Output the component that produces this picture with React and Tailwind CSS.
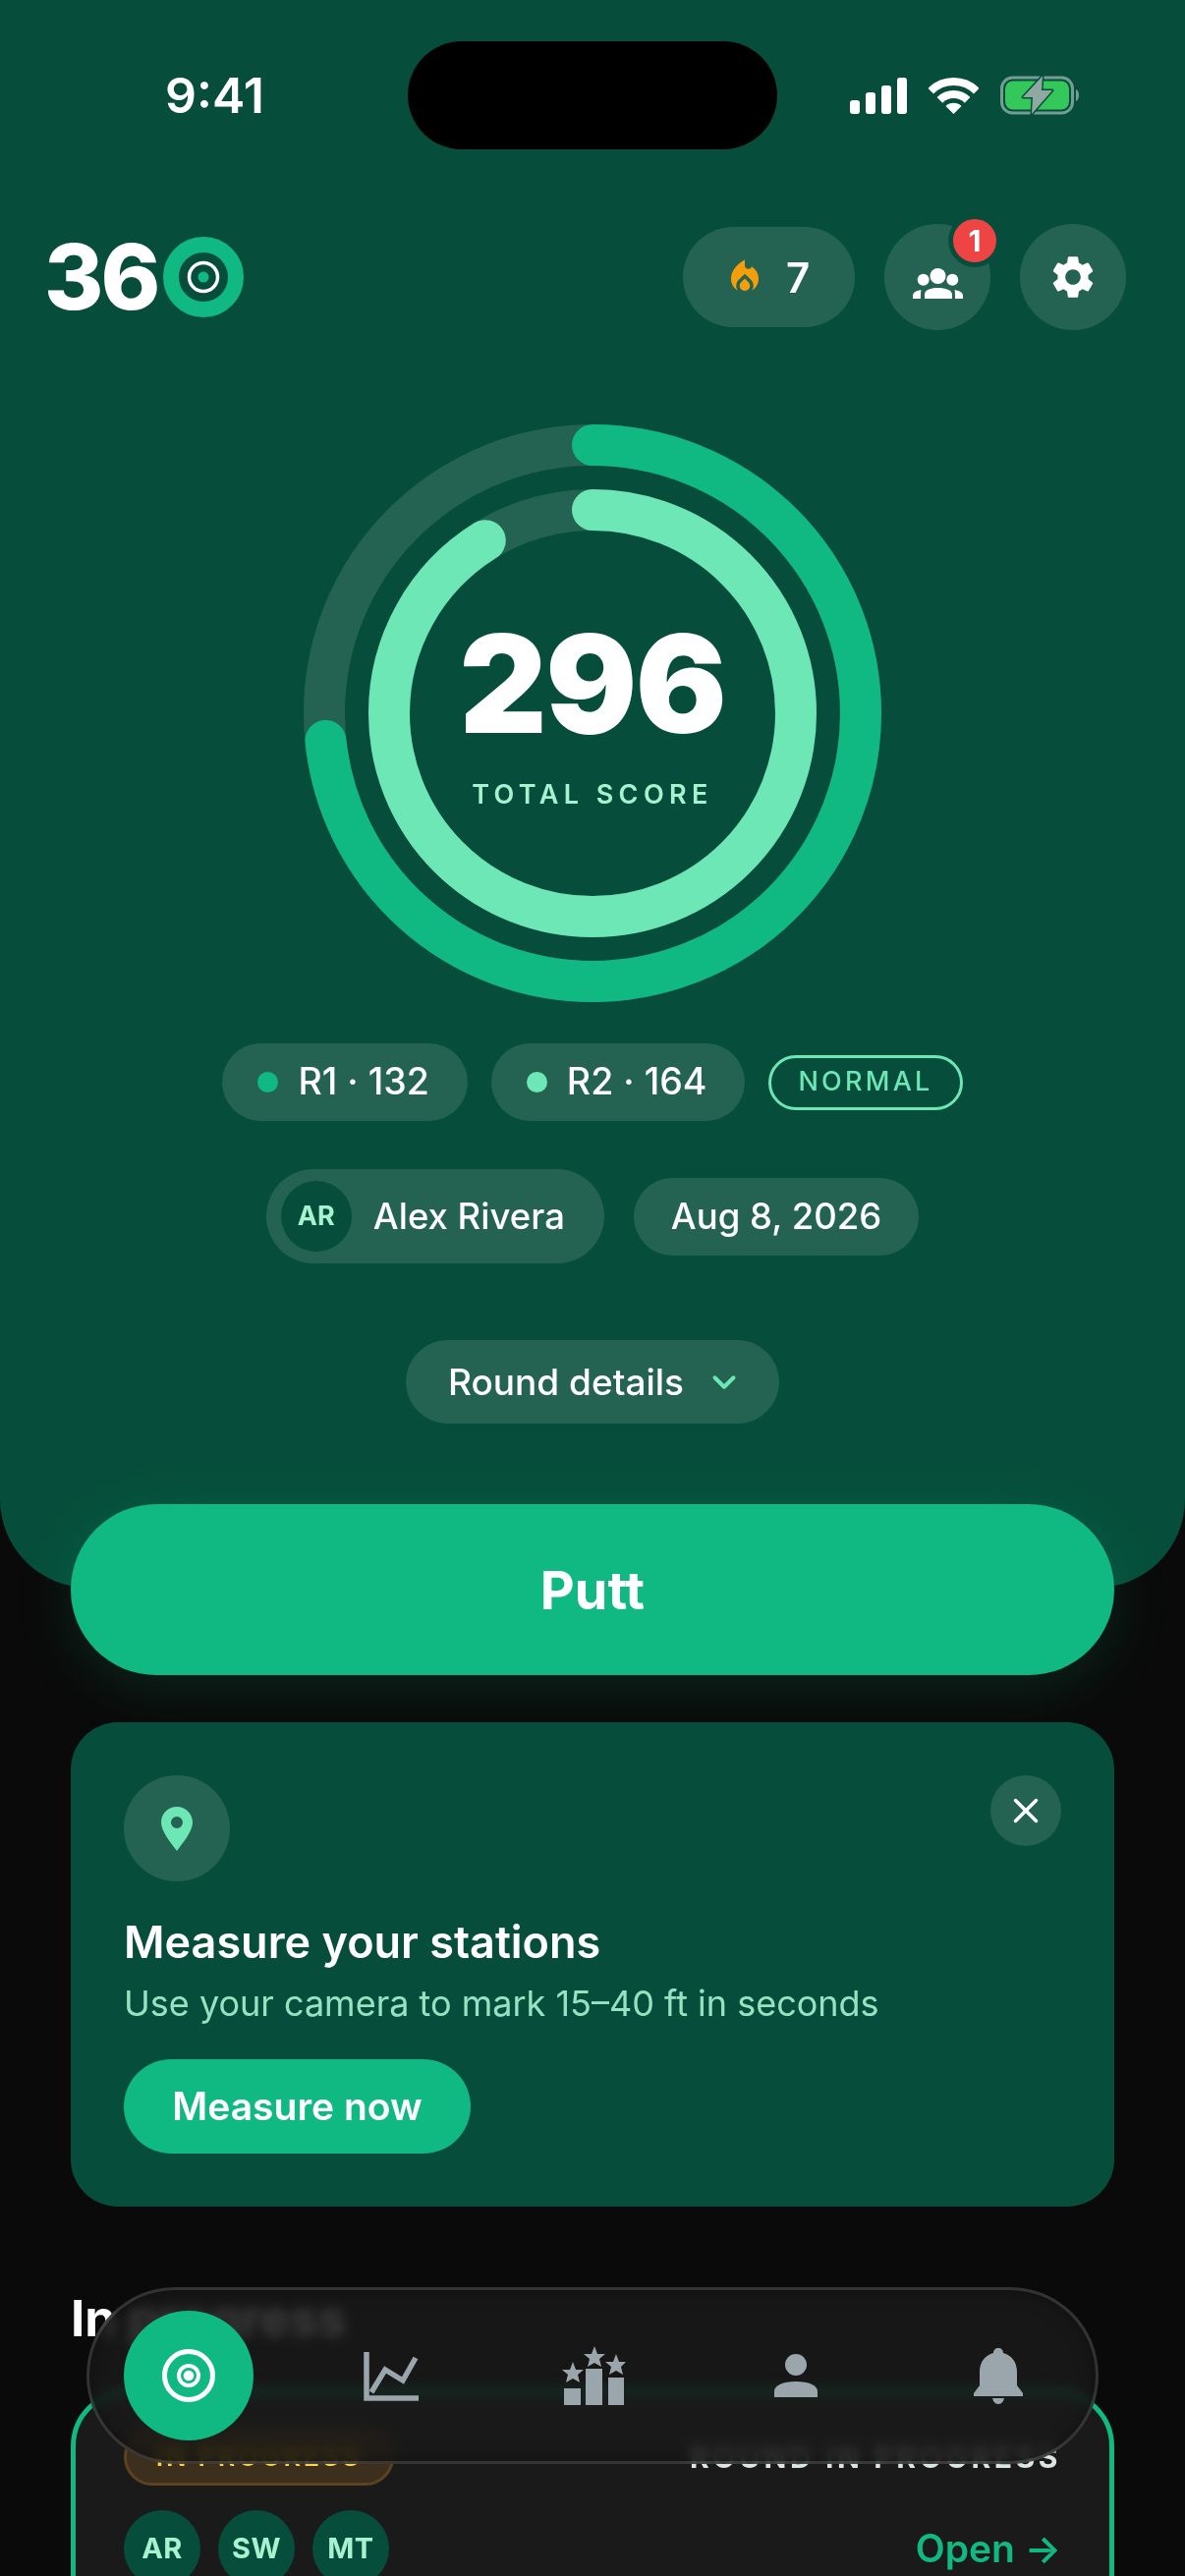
import { ChevronDown, X } from 'lucide-react';
import { MdLocalFireDepartment, MdSettings } from 'react-icons/md';

const OUTER_R = 273;
const INNER_R = 207;

const Ring = ({ radius, color, value }) => {
  const length = 2 * Math.PI * radius;
  return (
    <g fill="none" strokeWidth="42" transform="rotate(-90 294 294)">
      <circle cx="294" cy="294" r={radius} stroke="#ffffff" strokeOpacity="0.12" />
      <circle
        cx="294"
        cy="294"
        r={radius}
        stroke={color}
        strokeLinecap="round"
        strokeDasharray={`${(value / 180) * length} ${length}`}
      />
    </g>
  );
};

const StatusIcons = () => (
  <div className="flex items-center pl-[74px]">
    <svg width="58" height="37" viewBox="0 0 58 37" fill="#fff">
      <rect x="0" y="23" width="10" height="14" rx="3" />
      <rect x="16" y="15" width="10" height="22" rx="3" />
      <rect x="32" y="8" width="10" height="29" rx="3" />
      <rect x="48" y="0" width="10" height="37" rx="3" />
    </svg>
    <svg className="ml-[22px]" width="51" height="37" viewBox="0 0 51 37">
      <path d="M2.2 13.7A33 33 0 0 1 48.8 13.7M11.4 22.9A20 20 0 0 1 39.6 22.9" fill="none" stroke="#fff" strokeWidth="8" />
      <path d="M25.5 37L17.5 29A11.3 11.3 0 0 1 33.5 29Z" fill="#fff" />
    </svg>
    <svg className="ml-[22px]" width="84" height="42" viewBox="0 0 84 42">
      <rect x="1.5" y="3" width="72" height="36" rx="11" fill="none" stroke="#fff" strokeOpacity="0.45" strokeWidth="3" />
      <rect x="5" y="6.5" width="65" height="29" rx="8" fill="#34c759" />
      <path d="M77 15C81 16 81 26 77 27Z" fill="#fff" fillOpacity="0.45" />
      <path d="M43 1.3L23 23H33L32 40L53 16H42Z" fill="#8fa9a2" stroke="#064e3b" strokeWidth="3" strokeLinejoin="round" paintOrder="stroke" />
    </svg>
  </div>
);

const GroupIcon = () => (
  <svg width="51" height="31" viewBox="0 0 51 31" fill="#fff">
    <circle cx="25.5" cy="8" r="8" />
    <circle cx="10.7" cy="11.7" r="6" />
    <circle cx="40.3" cy="11.7" r="6" />
    <path d="M12 31V27C12 22 18 20 25.5 20S40 22 40 27V31Z" />
    <path d="M0 31V28C0 25 3 23 8.5 22C8 24 8 26 8 31Z" />
    <path d="M51 31V28C51 25 48 23 42.5 22C43 24 43 26 43 31Z" />
  </svg>
);

const ScoreChip = ({ dot, label }) => (
  <div className="flex h-[79px] items-center gap-[20px] rounded-full bg-white/12 pl-[36px] pr-[39px] text-[37.5px] font-medium text-white">
    <span className={`h-[21px] w-[21px] rounded-full ${dot}`} />
    {label}
  </div>
);

const NavChart = () => (
  <svg width="60" height="54" viewBox="0 0 60 54" fill="none" stroke="#9aa6ac" strokeWidth="5.5">
    <path d="M5 3V50H58" />
    <path d="M10 44L24 21L42 32L55 9" />
  </svg>
);

const NavPodium = () => (
  <svg width="66" height="60" viewBox="0 0 66 60" fill="#9aa6ac">
    <rect x="3" y="43" width="17" height="17" />
    <rect x="25" y="23" width="17" height="37" />
    <rect x="48" y="32" width="16" height="28" />
    <path d="M12 16L15 24L23 24L17 29L19 37L12 33L5 37L7 29L1 24L9 24Z" />
    <path d="M34 0L37 8L45 8L39 13L41 21L34 17L27 21L29 13L23 8L31 8Z" />
    <path d="M56 8L59 16L66 16L61 21L63 29L56 25L49 29L51 21L45 16L53 16Z" />
  </svg>
);

const NavPerson = () => (
  <svg width="44" height="44" viewBox="0 0 44 44" fill="#9aa6ac">
    <circle cx="22" cy="11" r="11" />
    <path d="M0 44V38C0 32 9 28 22 28S44 32 44 38V44Z" />
  </svg>
);

const NavBell = () => (
  <svg width="50" height="57" viewBox="0 0 50 57" fill="#9aa6ac">
    <path d="M25 0C28 0 30 2 30 5C38 7 44 14 44 24V38L50 46V49H0V46L6 38V24C6 14 12 7 20 5C20 2 22 0 25 0Z" />
    <path d="M19 51H31C30 55 28 57 25 57S20 55 19 51Z" />
  </svg>
);

const RoundAvatar = ({ initials }) => (
  <div className="flex h-[78px] w-[78px] items-center justify-center rounded-full bg-[#064e3b] text-[29px] font-bold tracking-[0.5px] text-[#a7f3d0]">
    {initials}
  </div>
);

const App = () => {
  return (
    <div className="relative h-[2622px] w-[1206px] overflow-hidden bg-[#0a0a0a] font-[Inter,sans-serif] text-white">
      <section className="h-[1616px] rounded-b-[90px] bg-[#064e3b] pt-[42px]">
        <div className="flex h-[110px] items-center">
          <div className="w-[415px] pl-[168px] text-[50px] font-semibold leading-none">9:41</div>
          <div className="h-[110px] w-[376px] rounded-full bg-black" />
          <StatusIcons />
        </div>

        <header className="mt-[76px] flex h-[108px] items-center justify-between pl-[45px] pr-[60px]">
          <div className="flex items-center gap-[6px]">
            <span className="text-[92px] font-extrabold leading-none tracking-[-3px]">36</span>
            <svg width="82" height="82" viewBox="0 0 82 82">
              <circle cx="41" cy="41" r="33" fill="none" stroke="#10b981" strokeWidth="16" />
              <circle cx="41" cy="41" r="14.5" fill="none" stroke="#fff" strokeWidth="3.5" />
              <circle cx="41" cy="41" r="5.5" fill="#10b981" />
            </svg>
          </div>
          <div className="flex items-center gap-[30px]">
            <div className="flex h-[102px] w-[175px] items-center gap-[21px] rounded-full bg-white/12 pl-[42px] text-[42px] font-semibold">
              <MdLocalFireDepartment size={42} color="#f59e0b" />
              7
            </div>
            <div className="relative flex h-[108px] w-[108px] items-center justify-center rounded-full bg-white/12">
              <span className="mt-[13px] block"><GroupIcon /></span>
              <span className="absolute right-[-11px] top-[-10px] flex h-[54px] w-[54px] items-center justify-center rounded-full border-[5px] border-[#064e3b] bg-[#ef4444] text-[30px] font-bold">
                1
              </span>
            </div>
            <div className="flex h-[108px] w-[108px] items-center justify-center rounded-full bg-white/12">
              <MdSettings size={52} />
            </div>
          </div>
        </header>

        <div className="mx-auto mt-[96px] grid h-[588px] w-[588px] place-items-center">
          <svg className="[grid-area:1/1]" width="588" height="588" viewBox="0 0 588 588">
            <Ring radius={OUTER_R} color="#10b981" value={132} />
            <Ring radius={INNER_R} color="#6ee7b7" value={164} />
          </svg>
          <div className="flex flex-col items-center [grid-area:1/1]">
            <span className="text-[138px] font-black leading-[138px] tracking-[-1.5px]">296</span>
            <span className="mt-[28px] text-[27px] font-semibold leading-[32px] tracking-[0.2em] text-[#a7f3d0]">TOTAL SCORE</span>
          </div>
        </div>

        <div className="mt-[42px] flex items-center justify-center gap-[24px]">
          <ScoreChip dot="bg-[#10b981]" label="R1 · 132" />
          <ScoreChip dot="bg-[#6ee7b7]" label="R2 · 164" />
          <div className="flex h-[56px] items-center rounded-full border-[3px] border-[#6ee7b7] px-[27px] text-[27px] font-medium tracking-[0.12em] text-[#6ee7b7]">
            NORMAL
          </div>
        </div>

        <div className="mt-[49px] flex items-center justify-center gap-[30px]">
          <div className="flex h-[96px] items-center gap-[22px] rounded-full bg-white/12 pl-[15px] pr-[40px] text-[36.5px] font-medium">
            <span className="flex h-[72px] w-[72px] items-center justify-center rounded-full bg-[#064e3b] text-[27px] font-bold text-[#a7f3d0]">AR</span>
            Alex Rivera
          </div>
          <div className="flex h-[79px] items-center rounded-full bg-white/12 px-[38px] text-[36.5px] font-medium">Aug 8, 2026</div>
        </div>

        <div className="mx-auto mt-[78px] flex h-[85px] w-[380px] items-center gap-[22px] rounded-full bg-white/12 pl-[43px] text-[37px] font-medium">
          Round details
          <ChevronDown size={38} strokeWidth={2.5} color="#6ee7b7" />
        </div>
      </section>

      <main className="px-[72px]">
        <button className="-mt-[85px] relative block h-[174px] w-full rounded-full bg-[#10b981] text-[54px] font-bold shadow-[0_12px_60px_rgba(16,185,129,0.16)]">
          Putt
        </button>

        <section className="relative mt-[48px] h-[493px] rounded-[48px] bg-[#064e3b] px-[54px] pt-[54px]">
          <div className="flex items-start justify-between">
            <div className="flex h-[108px] w-[108px] items-center justify-center rounded-full bg-white/12">
              <svg width="32" height="45" viewBox="0 0 32 45">
                <path fillRule="evenodd" d="M16 0C25 0 32 7 32 16C32 25 22 37 16 45C10 37 0 25 0 16C0 7 7 0 16 0ZM16 10A6 6 0 1 0 16 22A6 6 0 1 0 16 10Z" fill="#6ee7b7" />
              </svg>
            </div>
            <div className="flex h-[72px] w-[72px] items-center justify-center rounded-full bg-white/12">
              <X size={42} strokeWidth={2} />
            </div>
          </div>
          <h2 className="mt-[33px] text-[45px] font-semibold leading-[58px]">Measure your stations</h2>
          <p className="mt-[11px] text-[36px] leading-[44px] text-[#a7f3d0]/90">Use your camera to mark 15–40 ft in seconds</p>
          <button className="mt-[35px] flex h-[96px] w-[353px] items-center justify-center rounded-full bg-[#10b981] text-[39px] font-semibold">
            Measure now
          </button>
        </section>

        <h2 className="mt-[84px] text-[51px] font-bold leading-[60px]">In progress</h2>

        <section className="mt-[42px] h-[300px] rounded-[58px] border-[5px] border-[#10b981] bg-[#1a1a1a] px-[49px] pt-[35px]">
          <div className="flex h-[58px] items-center justify-between">
            <span className="flex h-[58px] w-[275px] items-center justify-center rounded-full border-[3px] border-[#5c4320] bg-[#3d2f1e] text-[27px] font-semibold tracking-[0.1em] text-[#fcd34d]">
              IN PROGRESS
            </span>
            <span className="text-[30px] font-bold tracking-[0.12em] text-[#dbe5e1]">ROUND IN PROGRESS</span>
          </div>
          <div className="mt-[25px] flex items-center justify-between">
            <div className="flex gap-[18px]">
              <RoundAvatar initials="AR" />
              <RoundAvatar initials="SW" />
              <RoundAvatar initials="MT" />
            </div>
            <span className="text-[39px] font-semibold text-[#10b981]">Open →</span>
          </div>
        </section>
      </main>

      <nav className="absolute bottom-[114px] left-[88px] flex h-[180px] w-[1030px] items-center justify-between rounded-full border-[3px] border-white/12 bg-[#1a1a1a]/85 pl-[35px] pr-[33px] shadow-[inset_0_0_18px_rgba(0,0,0,0.35)] backdrop-blur-[6px] backdrop-saturate-[1.8]">
        <div className="flex h-[132px] w-[132px] items-center justify-center rounded-full bg-[#10b981]">
          <svg width="54" height="54" viewBox="0 0 54 54" fill="none" stroke="#fff">
            <circle cx="27" cy="27" r="24.5" strokeWidth="5" />
            <circle cx="27" cy="27" r="10" strokeWidth="4" />
            <circle cx="27" cy="27" r="5.3" fill="#fff" stroke="none" />
          </svg>
        </div>
        <div className="flex w-[132px] justify-center"><NavChart /></div>
        <div className="flex w-[132px] justify-center"><NavPodium /></div>
        <div className="flex w-[132px] justify-center"><NavPerson /></div>
        <div className="flex w-[132px] justify-center"><NavBell /></div>
      </nav>
    </div>
  );
};

export default App;
